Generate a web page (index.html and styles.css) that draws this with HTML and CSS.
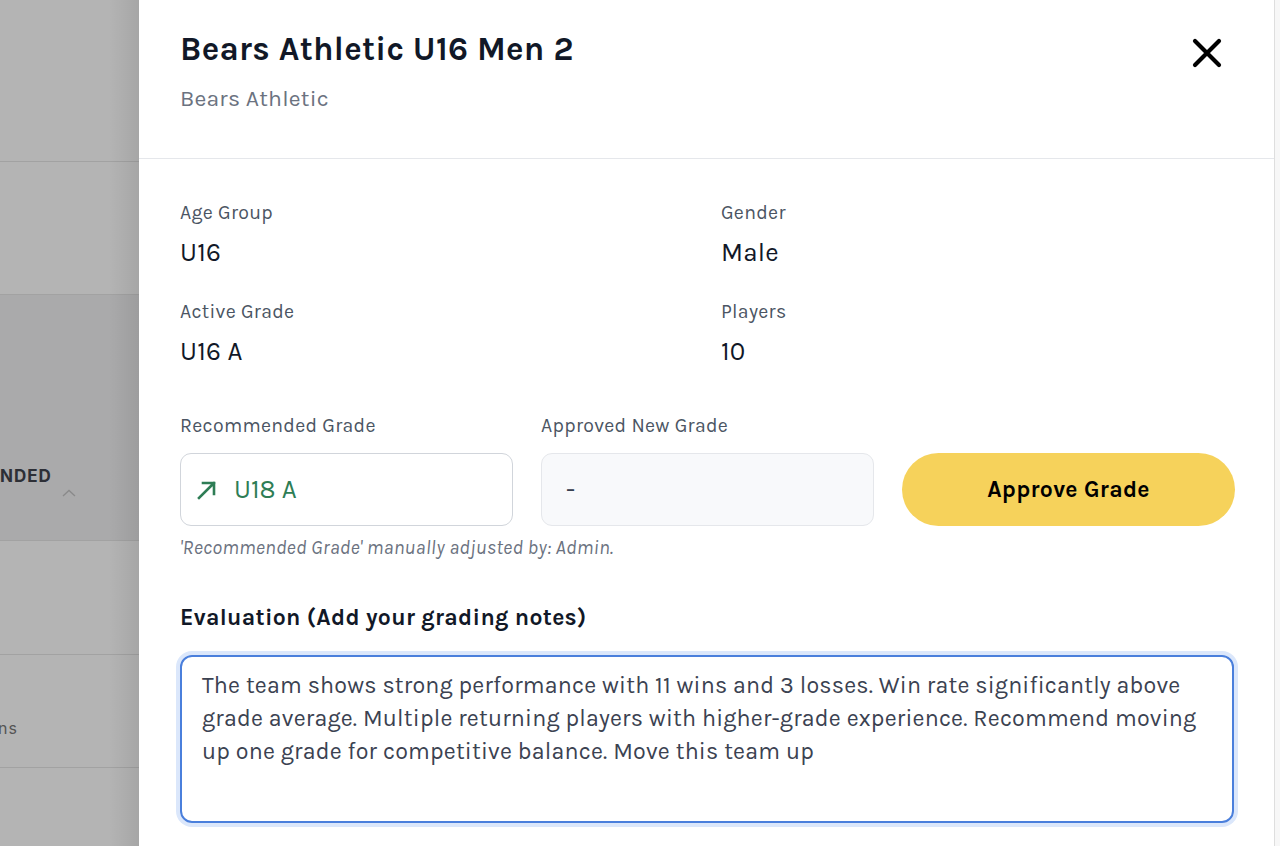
FILE: index.html
```html
<!DOCTYPE html>
<html lang="en">
<head>
<meta charset="utf-8">
<title>Team Grade</title>
<link rel="stylesheet" href="styles.css">
</head>
<body>
<div class="screen">
  <aside class="backdrop">
    <div class="bd-row bd-top"></div>
    <div class="bd-row bd-r1"></div>
    <div class="bd-row bd-active"><span class="bd-head">NDED</span><span class="bd-caret">
      <svg width="14" height="8" viewBox="0 0 14 8"><path d="M1 7 L7 1.5 L13 7" fill="none" stroke="#8a8a8a" stroke-width="1.3"/></svg></span></div>
    <div class="bd-row bd-r2"></div>
    <div class="bd-row bd-r3"><span class="bd-text">ns</span></div>
    <div class="bd-row bd-r4"></div>
    <div class="bd-shadow"></div>
  </aside>
  <main class="panel">
    <header class="panel-head">
      <div class="titles">
        <h1 class="title">Bears Athletic U16 Men 2</h1>
        <p class="subtitle">Bears Athletic</p>
      </div>
      <button class="close" aria-label="Close">
        <svg width="30" height="30" viewBox="0 0 30 30"><path d="M3 3 L27 27 M27 3 L3 27" stroke="#000" stroke-width="4.2" stroke-linecap="round"/></svg>
      </button>
    </header>
    <section class="body">
      <div class="facts">
        <div class="fact"><div class="label">Age Group</div><div class="value">U16</div></div>
        <div class="fact"><div class="label">Gender</div><div class="value">Male</div></div>
        <div class="fact"><div class="label">Active Grade</div><div class="value">U16 A</div></div>
        <div class="fact"><div class="label">Players</div><div class="value">10</div></div>
      </div>
      <div class="grades">
        <div class="field">
          <div class="label">Recommended Grade</div>
          <div class="box box-rec">
            <svg class="arrow" width="22" height="22" viewBox="0 0 22 22"><path d="M3 19 L18 4 M7 4 H18 V15" fill="none" stroke="#2e7d55" stroke-width="2.6" stroke-linecap="square"/></svg>
            <span>U18 A</span>
          </div>
        </div>
        <div class="field">
          <div class="label">Approved New Grade</div>
          <div class="box box-new">-</div>
        </div>
        <div class="field field-btn">
          <button class="approve">Approve Grade</button>
        </div>
      </div>
      <p class="hint">'Recommended Grade' manually adjusted by: Admin.</p>
      <h2 class="eval-label">Evaluation (Add your grading notes)</h2>
      <div class="textarea">The team shows strong performance with 11 wins and 3 losses. Win rate significantly above grade average. Multiple returning players with higher-grade experience. Recommend moving up one grade for competitive balance. Move this team up</div>
    </section>
  </main>
  <div class="scrollbar"></div>
</div>
</body>
</html>
```
FILE: styles.css
```css
* { box-sizing: border-box; }
html, body { margin: 0; padding: 0; }
body {
  font-family: "Karla", "Inter", "Liberation Sans", sans-serif;
  width: 1280px;
  height: 846px;
  overflow: hidden;
  background: #fff;
}
.screen {
  display: flex;
  height: 846px;
}
.backdrop {
  width: 139px;
  flex: none;
  background: #b4b4b4;
  display: flex;
  flex-direction: column;
  position: relative;
}
.bd-row {
  border-bottom: 1.5px solid #a2a2a2;
  position: relative;
}
.bd-top { height: 162px; }
.bd-r1 { height: 133px; }
.bd-active { height: 246px; background: #aaaaab; }
.bd-r2 { height: 114px; }
.bd-r3 { height: 113px; }
.bd-r4 { flex: 1; border-bottom: none; }
.bd-head {
  position: absolute;
  left: 0;
  top: 171px;
  font-family: "Inter", sans-serif;
  font-size: 17px;
  font-weight: 700;
  letter-spacing: 1px;
  color: #2d2f36;
}
.bd-caret { position: absolute; left: 62px; top: 187px; }
.bd-text {
  position: absolute;
  left: -2px;
  top: 63px;
  font-family: "Inter", sans-serif;
  font-size: 16px;
  letter-spacing: 1px;
  color: #555;
}
.bd-shadow {
  position: absolute;
  top: 0; right: 0; bottom: 0;
  width: 30px;
  background: linear-gradient(to right, rgba(0,0,0,0), rgba(0,0,0,0.08));
}
.panel {
  width: 1135px;
  flex: none;
  background: #fff;
  display: flex;
  flex-direction: column;
}
.scrollbar {
  flex: 1;
  background: #f7f7f7;
  border-left: 1px solid #dedede;
}
.panel-head {
  display: flex;
  justify-content: space-between;
  align-items: flex-start;
  padding: 29px 52px 0 41px;
  height: 159px;
  border-bottom: 1.5px solid #e5e7eb;
}
.title {
  margin: 0;
  font-size: 33px;
  line-height: 40px;
  font-weight: 700;
  color: #111827;
  letter-spacing: 0.3px;
}
.subtitle {
  margin: 15px 0 0;
  font-size: 23px;
  line-height: 30px;
  color: #6b7280;
  letter-spacing: 0.2px;
}
.close {
  border: 0;
  background: none;
  padding: 0;
  margin-top: 9px;
  cursor: pointer;
  width: 30px;
  height: 30px;
}
.body {
  padding: 41px 40px 0 41px;
}
.facts {
  display: grid;
  grid-template-columns: 541px 1fr;
  row-gap: 29px;
}
.label {
  font-size: 19.5px;
  line-height: 26px;
  color: #4b5563;
  letter-spacing: 0.3px;
}
.value {
  margin-top: 10px;
  font-size: 26px;
  line-height: 34px;
  color: #111827;
  letter-spacing: 0.2px;
}
.grades {
  margin-top: 44px;
  display: grid;
  grid-template-columns: 333px 333px 333px;
  column-gap: 28px;
}
.field .label { margin-bottom: 14px; }
.box {
  height: 73px;
  border-radius: 11px;
  display: flex;
  align-items: center;
  padding: 0 24px;
  font-size: 26px;
}
.box-rec {
  border: 1.5px solid #d1d5db;
  background: #fff;
  color: #2e7d55;
  gap: 16px;
  padding-left: 15px;
}
.box-new {
  border: 1.5px solid #e5e7eb;
  background: #f8f9fb;
  color: #374151;
}
.field-btn {
  display: flex;
  align-items: flex-end;
}
.approve {
  width: 100%;
  height: 73px;
  border: 0;
  border-radius: 37px;
  background: #f6d25b;
  font-family: inherit;
  font-size: 23px;
  font-weight: 700;
  color: #000;
  letter-spacing: 0.3px;
}
.hint {
  margin: 10px 0 0;
  font-size: 19.7px;
  line-height: 24px;
  font-style: italic;
  color: #6b7280;
  letter-spacing: 0.2px;
}
.eval-label {
  margin: 43px 0 0;
  font-size: 23px;
  line-height: 30px;
  font-weight: 700;
  color: #111827;
  letter-spacing: 0.3px;
}
.textarea {
  margin-top: 22px;
  height: 168px;
  border: 2px solid #4a7fdc;
  border-radius: 12px;
  box-shadow: 0 0 0 4px #dbe7fb;
  padding: 12px 20px;
  font-size: 23.25px;
  line-height: 33px;
  color: #3b4251;
  letter-spacing: 0.2px;
}
```
